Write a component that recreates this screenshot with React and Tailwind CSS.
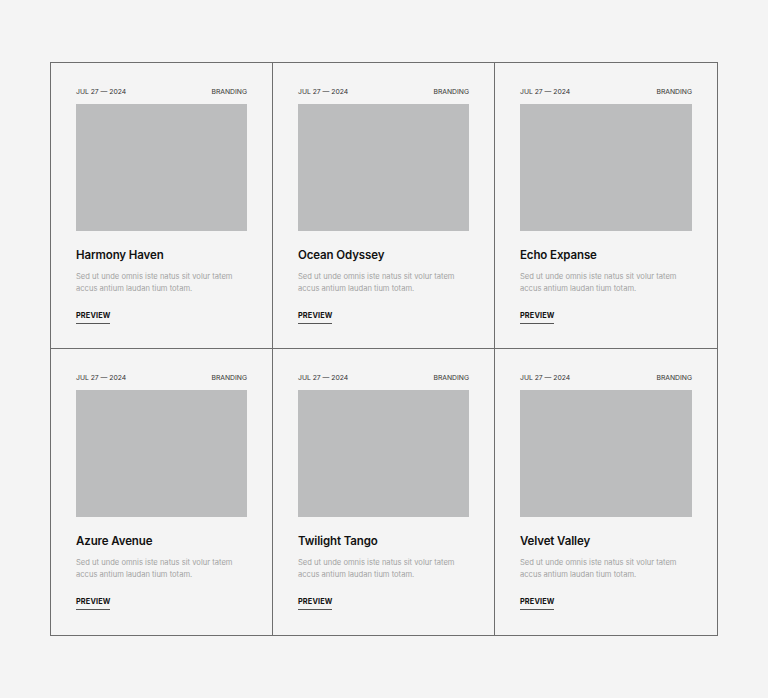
import React from 'react';

const projects = [
  { title: 'Harmony Haven' },
  { title: 'Ocean Odyssey' },
  { title: 'Echo Expanse' },
  { title: 'Azure Avenue' },
  { title: 'Twilight Tango' },
  { title: 'Velvet Valley' },
];

const ProjectCard = ({ title, last }) => (
  <div className={`${last ? 'h-[287px]' : 'h-[286px]'} border-r border-b border-[#6e6e6e] px-[25px] pt-[24px]`}>
    <div className="flex items-center justify-between text-[6.8px] leading-[10px] text-[#333]">
      <span>JUL 27 — 2024</span>
      <span>BRANDING</span>
    </div>
    <div className="mt-[7px] h-[127px] bg-[#bcbdbe]" />
    <h3 className="mt-[16px] text-[11.5px] leading-[16px] font-semibold text-[#111] tracking-[-0.01em]">
      {title}
    </h3>
    <p className="mt-[8px] text-[7.6px] leading-[12px] text-[#a3a3a3]">
      Sed ut unde omnis iste natus sit volur tatem<br />
      accus antium laudan tium totam.
    </p>
    <a href="#" className="mt-[16px] inline-block border-b border-[#555] pb-[2px] text-[7.3px] leading-[10px] font-bold text-[#111] tracking-[0.02em]">
      PREVIEW
    </a>
  </div>
);

export default function App() {
  return (
    <div className="min-h-[698px] bg-[#f4f4f4] pt-[62px] font-['Inter','Noto_Sans',sans-serif]">
      <div className="mx-auto grid w-[668px] grid-cols-[222px_222px_223px] border-l border-t border-[#6e6e6e]">
        {projects.map((p, i) => (
          <ProjectCard key={p.title} title={p.title} last={i > 2} />
        ))}
      </div>
    </div>
  );
}
